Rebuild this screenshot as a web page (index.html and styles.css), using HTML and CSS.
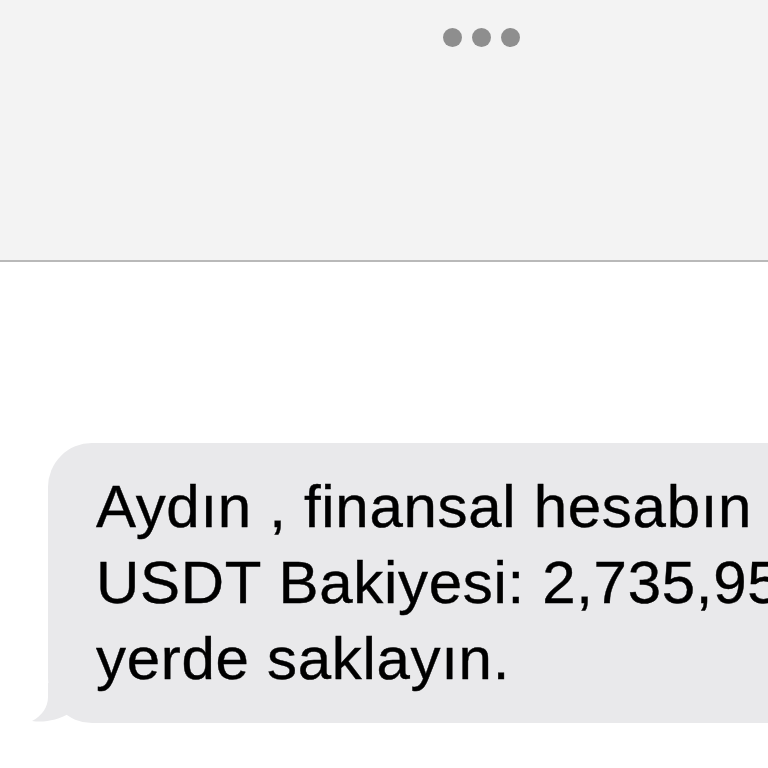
FILE: index.html
```html
<!DOCTYPE html>
<html lang="tr">
<head>
<meta charset="utf-8">
<link rel="stylesheet" href="styles.css">
</head>
<body>
<div class="page">
  <header class="header">
    <div class="dots"><span class="dot"></span><span class="dot"></span><span class="dot"></span></div>
  </header>
  <main class="thread">
    <div class="bubble">
      <svg class="tail" width="50" height="40" viewBox="0 0 50 40"><path d="M18 0 L18 14 C18 24 12 33 2 38 C14 40 28 37 40 30 L50 30 L50 0 Z" fill="#e9e9eb"/></svg>
      <p class="msg">Aydın , finansal hesabın güncellendi.<br>USDT Bakiyesi: 2,735,95 USDT. Güvenli bir<br>yerde saklayın.</p>
    </div>
  </main>
</div>
</body>
</html>
```
FILE: styles.css
```css
html, body {
  margin: 0;
  padding: 0;
  background: #ffffff;
  overflow: hidden;
}
.page {
  width: 768px;
  height: 768px;
  overflow: hidden;
}
.header {
  height: 260px;
  background: #f3f3f3;
  border-bottom: 2px solid #b9b9b9;
  display: flex;
  justify-content: flex-start;
  padding-left: 443px;
  box-sizing: content-box;
}
.dots {
  display: flex;
  gap: 10px;
  margin-top: 28px;
  height: 19px;
}
.dot {
  width: 19px;
  height: 19px;
  border-radius: 50%;
  background: #8e8e8e;
}
.thread {
  padding-top: 181px;
  padding-left: 48px;
}
.bubble {
  position: relative;
  width: 900px;
  height: 280px;
  box-sizing: border-box;
  background: #e9e9eb;
  border-radius: 44px;
  padding: 26px 0 0 48px;
}
.tail {
  position: absolute;
  left: -18px;
  bottom: 0;
}
.msg {
  margin: 0;
  font-family: "Liberation Sans", Arial, sans-serif;
  font-size: 60px;
  line-height: 76px;
  letter-spacing: 0.7px;
  color: #000;
  white-space: nowrap;
  -webkit-text-stroke: 0.4px #000;
}
```
